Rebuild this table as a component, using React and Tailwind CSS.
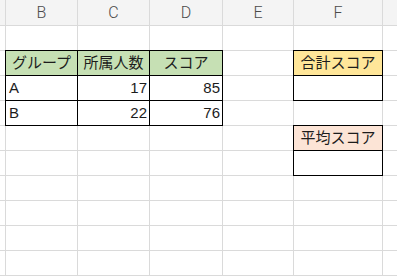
const COLS = ['', 'B', 'C', 'D', 'E', 'F', '']

// cell content keyed by "row-col" (row 1 = first data row below the column headers)
const CELLS = {
  '2-1': { text: 'グループ', fill: 'bg-[#c6e0b4]', align: 'center', box: true },
  '2-2': { text: '所属人数', fill: 'bg-[#c6e0b4]', align: 'center', box: true },
  '2-3': { text: 'スコア', fill: 'bg-[#c6e0b4]', align: 'center', box: true },
  '3-1': { text: 'A', align: 'left', box: true },
  '3-2': { text: '17', align: 'right', box: true },
  '3-3': { text: '85', align: 'right', box: true },
  '4-1': { text: 'B', align: 'left', box: true },
  '4-2': { text: '22', align: 'right', box: true },
  '4-3': { text: '76', align: 'right', box: true },
  '2-5': { text: '合計スコア', fill: 'bg-[#ffe699]', align: 'center', box: true },
  '3-5': { text: '', box: true },
  '5-5': { text: '平均スコア', fill: 'bg-[#fce4d6]', align: 'center', box: true },
  '6-5': { text: '', box: true },
}

const alignClass = {
  left: 'justify-start pl-[3px]',
  right: 'justify-end pr-[2px]',
  center: 'justify-center',
}

function Cell({ row, col }) {
  const cell = CELLS[`${row}-${col}`]
  if (!cell) return <div className="bg-white" />
  return (
    <div
      className={`flex items-center pt-px text-[15px] text-[#1c1c1c] ${cell.fill || 'bg-white'} ${
        alignClass[cell.align || 'left']
      } ${cell.box ? 'outline outline-1 outline-black' : ''}`}
    >
      {cell.text}
    </div>
  )
}

export default function App() {
  const rows = Array.from({ length: 11 }, (_, i) => i + 1)
  return (
    <div
      className="w-[397px] h-[276px] overflow-hidden bg-white"
      style={{ fontFamily: '"Liberation Sans", "Noto Sans CJK JP", sans-serif' }}
    >
      <div className="grid grid-cols-[5px_71px_71px_72px_70px_88px_40px] grid-rows-[25px] auto-rows-[24px] gap-px bg-[#dadada] w-max">
        {COLS.map((c, i) => (
          <div
            key={`h${i}`}
            className="flex items-center justify-center bg-[#f4f4f4] font-['Roboto',sans-serif] font-light text-[16px] text-[#4a4a4a]"
          >
            {c}
          </div>
        ))}
        {rows.map((r) =>
          COLS.map((_, c) => <Cell key={`${r}-${c}`} row={r} col={c} />)
        )}
      </div>
    </div>
  )
}
